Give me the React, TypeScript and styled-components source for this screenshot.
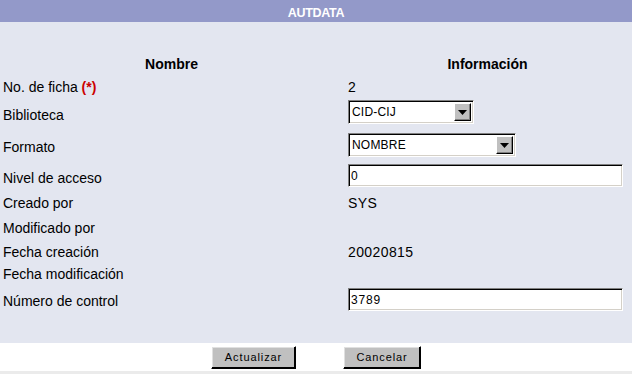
import React from "react";
import styled, { createGlobalStyle } from "styled-components";

const Global = createGlobalStyle`
  html, body { margin: 0; padding: 0; background: #ebebeb; }
  body { font-family: "Liberation Sans", Arial, sans-serif; color: #000; }
`;

const Page = styled.div`
  width: 632px;
  display: flex;
  flex-direction: column;
`;

const TitleBar = styled.div`
  height: 22px;
  box-sizing: border-box;
  padding-top: 5px;
  background: #9399c9;
  color: #fff;
  font-weight: bold;
  font-size: 12.5px;
  letter-spacing: -0.3px;
  line-height: 16px;
  text-align: center;
`;

const Body = styled.div`
  background: #e3e6f0;
  padding-top: 34px;
  display: flex;
  flex-direction: column;
`;

const Row = styled.div<{ $h: number }>`
  display: grid;
  grid-template-columns: 343px 1fr;
  height: ${(p) => p.$h}px;
  align-items: start;
`;

const HeadCell = styled.div`
  font-weight: bold;
  font-size: 14px;
  line-height: 16px;
  text-align: center;
`;

const Label = styled.div`
  padding-left: 3px;
  font-size: 14px;
  line-height: 16px;
  white-space: nowrap;
`;

const Req = styled.span`
  color: #cc0000;
  font-weight: bold;
`;

const ValueCell = styled.div`
  padding-left: 5px;
  height: 16px;
  display: flex;
  align-items: center;
  font-size: 14px;
  line-height: 16px;
  letter-spacing: 0.4px;
`;

const Field = styled.div<{ $w: number; $h: number; $lift: number }>`
  width: ${(p) => p.$w}px;
  height: ${(p) => p.$h}px;
  margin-bottom: ${(p) => p.$lift}px;
  flex-shrink: 0;
  box-sizing: border-box;
  background: #fff;
  border: 1px solid;
  border-color: #808080 #fff #fff #808080;
  box-shadow: inset 1px 1px 0 #000, inset -1px -1px 0 #d4d0c8;
  display: flex;
  align-items: center;
`;

const SelectText = styled.span`
  font-size: 12px;
  padding-left: 3px;
  letter-spacing: 0.2px;
  flex: 1;
`;

const InputText = styled.span`
  font-size: 12px;
  padding-left: 2px;
  letter-spacing: 0.8px;
`;

const ArrowBtn = styled.div`
  width: 17px;
  height: 18px;
  margin-right: 2px;
  box-sizing: border-box;
  background: #c0c0c0;
  border: 1px solid;
  border-color: #fff #000 #000 #fff;
  box-shadow: inset -1px -1px 0 #808080;
  display: flex;
  align-items: center;
  justify-content: center;
`;

const Footer = styled.div`
  background: #fff;
  height: 28px;
  box-sizing: border-box;
  padding-top: 3px;
  display: flex;
  justify-content: center;
  gap: 47px;
`;

const Button = styled.div<{ $w: number }>`
  width: ${(p) => p.$w}px;
  height: 23px;
  box-sizing: border-box;
  background: #c0c0c0;
  border: 1px solid;
  border-color: #fff #000 #000 #fff;
  box-shadow: inset -1px -1px 0 #000, inset 1px 1px 0 #e0e0e0;
  font-size: 11px;
  letter-spacing: 0.9px;
  display: flex;
  align-items: center;
  justify-content: center;
  padding-bottom: 1px;
`;

const Arrow = () => (
  <svg width="9" height="5" viewBox="0 0 9 5">
    <polygon points="0,0 9,0 4.5,5" fill="#000" />
  </svg>
);

const Select = ({ w, lift, value }: { w: number; lift: number; value: string }) => (
  <Field $w={w} $h={24} $lift={lift}>
    <SelectText>{value}</SelectText>
    <ArrowBtn>
      <Arrow />
    </ArrowBtn>
  </Field>
);

const Input = ({ lift, value }: { lift: number; value: string }) => (
  <Field $w={275} $h={23} $lift={lift}>
    <InputText>{value}</InputText>
  </Field>
);

export default function App() {
  return (
    <Page>
      <Global />
      <TitleBar>AUTDATA</TitleBar>
      <Body>
        <Row $h={23}>
          <HeadCell>Nombre</HeadCell>
          <HeadCell>Información</HeadCell>
        </Row>
        <Row $h={28}>
          <Label>
            No. de ficha <Req>(*)</Req>
          </Label>
          <ValueCell>2</ValueCell>
        </Row>
        <Row $h={32}>
          <Label>Biblioteca</Label>
          <ValueCell>
            <Select w={126} lift={6} value="CID-CIJ" />
          </ValueCell>
        </Row>
        <Row $h={31}>
          <Label>Formato</Label>
          <ValueCell>
            <Select w={168} lift={4} value="NOMBRE" />
          </ValueCell>
        </Row>
        <Row $h={25}>
          <Label>Nivel de acceso</Label>
          <ValueCell>
            <Input lift={5} value="0" />
          </ValueCell>
        </Row>
        <Row $h={25}>
          <Label>Creado por</Label>
          <ValueCell>SYS</ValueCell>
        </Row>
        <Row $h={24}>
          <Label>Modificado por</Label>
          <ValueCell />
        </Row>
        <Row $h={22}>
          <Label>Fecha creación</Label>
          <ValueCell>20020815</ValueCell>
        </Row>
        <Row $h={27}>
          <Label>Fecha modificación</Label>
          <ValueCell />
        </Row>
        <Row $h={50}>
          <Label>Número de control</Label>
          <ValueCell>
            <Input lift={3} value="3789" />
          </ValueCell>
        </Row>
      </Body>
      <Footer>
        <Button $w={85}>Actualizar</Button>
        <Button $w={78}>Cancelar</Button>
      </Footer>
    </Page>
  );
}
